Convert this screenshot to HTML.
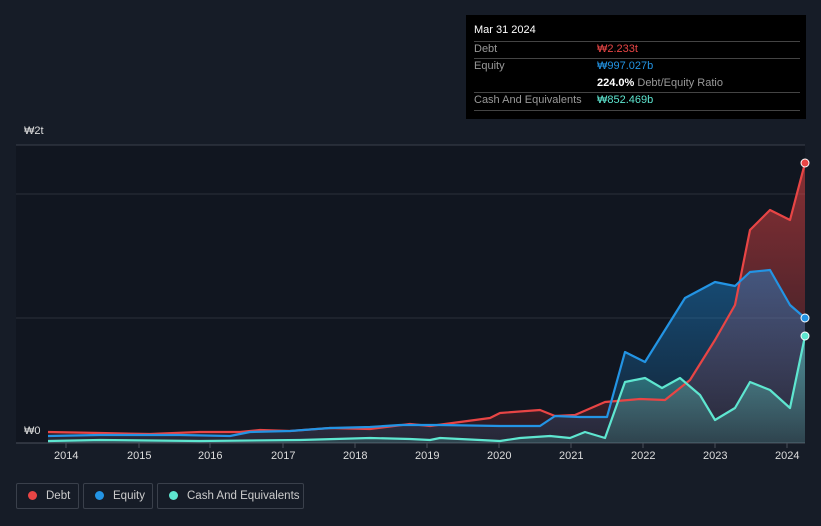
<!DOCTYPE html><html><head><style>
body{margin:0;width:821px;height:526px;background:#161c27;font-family:"Liberation Sans",sans-serif;overflow:hidden;position:relative}
.tt{position:absolute;left:466px;top:15px;width:340px;height:104px;background:#000;color:#fff;font-size:11px}
.r{position:absolute;left:8px;width:326px;border-top:1px solid #444}
.l{position:absolute;left:8px;color:#999}
.v{position:absolute;left:131px}
.lg{position:absolute;top:483px;height:26px;border:1px solid #3a404b;border-radius:2px;color:#ccc;font-size:11.5px;line-height:24px;box-sizing:border-box;white-space:nowrap}
.lg i{display:inline-block;width:9px;height:9px;border-radius:50%;margin:0 9px 0 11px;vertical-align:-1px}
.ax{position:absolute;top:450px;color:#ddd;font-size:11px}
</style></head><body>
<svg width="821" height="526" style="position:absolute;left:0;top:0">
<defs>
<linearGradient id="gr" x1="0" y1="0" x2="0" y2="1"><stop offset="0" stop-color="#e84545" stop-opacity=".55"/><stop offset="1" stop-color="#e84545" stop-opacity=".1"/></linearGradient>
<linearGradient id="gb" x1="0" y1="0" x2="0" y2="1"><stop offset="0" stop-color="#1e8fe0" stop-opacity=".45"/><stop offset="1" stop-color="#1e8fe0" stop-opacity=".1"/></linearGradient>
<linearGradient id="gc" x1="0" y1="0" x2="0" y2="1"><stop offset="0" stop-color="#5ee6d0" stop-opacity=".45"/><stop offset="1" stop-color="#5ee6d0" stop-opacity=".15"/></linearGradient>
</defs>
<rect x="16" y="145" width="789" height="298" fill="#111620"/>
<line x1="16" y1="145" x2="805" y2="145" stroke="#3a404b"/>
<line x1="16" y1="194" x2="805" y2="194" stroke="#2a303a"/>
<line x1="16" y1="318" x2="805" y2="318" stroke="#2a303a"/>
<line x1="16" y1="443" x2="805" y2="443" stroke="#4a505b"/>
<path d="M48,432 L100,433 150,434 200,432 240,432 260,430 290,431 330,428 370,429 410,424 430,426 460,422 490,418 500,413 540,410 555,416 575,415 605,402 640,399 665,400 690,380 715,340 735,305 750,230 770,210 790,220 805,163 L805,443 48,443Z" fill="url(#gr)"/>
<path d="M48,436 L100,435 180,435 230,436 250,432 290,431 330,428 370,427 400,425 440,425 500,426 540,426 555,416 580,417 607,417 625,352 645,362 665,330 685,298 715,282 735,286 750,272 770,270 790,305 805,318 L805,443 48,443Z" fill="url(#gb)"/>
<path d="M48,441 L100,440 200,441 300,440 370,438 410,439 430,440 440,438 500,441 520,438 550,436 570,438 585,432 605,438 625,382 645,378 662,388 680,378 700,395 715,420 735,408 750,382 770,390 790,408 805,336 L805,443 48,443Z" fill="url(#gc)"/>
<g fill="none" stroke-width="2.2" stroke-linejoin="round">
<path d="M48,432 L100,433 150,434 200,432 240,432 260,430 290,431 330,428 370,429 410,424 430,426 460,422 490,418 500,413 540,410 555,416 575,415 605,402 640,399 665,400 690,380 715,340 735,305 750,230 770,210 790,220 805,163" stroke="#e84545"/>
<path d="M48,436 L100,435 180,435 230,436 250,432 290,431 330,428 370,427 400,425 440,425 500,426 540,426 555,416 580,417 607,417 625,352 645,362 665,330 685,298 715,282 735,286 750,272 770,270 790,305 805,318" stroke="#2394e4"/>
<path d="M48,441 L100,440 200,441 300,440 370,438 410,439 430,440 440,438 500,441 520,438 550,436 570,438 585,432 605,438 625,382 645,378 662,388 680,378 700,395 715,420 735,408 750,382 770,390 790,408 805,336" stroke="#5ee6d0"/>
</g>
<circle cx="805" cy="163" r="4" fill="#e84545" stroke="#fff" stroke-width="1"/>
<circle cx="805" cy="318" r="4" fill="#2394e4" stroke="#fff" stroke-width="1"/>
<circle cx="805" cy="336" r="4" fill="#5ee6d0" stroke="#fff" stroke-width="1"/>
<g stroke="#4a505b"><line x1="66" y1="443" x2="66" y2="448"/><line x1="139" y1="443" x2="139" y2="448"/><line x1="210" y1="443" x2="210" y2="448"/><line x1="283" y1="443" x2="283" y2="448"/><line x1="355" y1="443" x2="355" y2="448"/><line x1="427" y1="443" x2="427" y2="448"/><line x1="499" y1="443" x2="499" y2="448"/><line x1="571" y1="443" x2="571" y2="448"/><line x1="643" y1="443" x2="643" y2="448"/><line x1="715" y1="443" x2="715" y2="448"/><line x1="787" y1="443" x2="787" y2="448"/></g>
</svg>
<div style="position:absolute;left:24px;top:125px;color:#ddd;font-size:11px">₩2t</div>
<div style="position:absolute;left:24px;top:425px;color:#ddd;font-size:11px">₩0</div>
<div class="ax" style="left:54px">2014</div><div class="ax" style="left:127px">2015</div><div class="ax" style="left:198px">2016</div><div class="ax" style="left:271px">2017</div><div class="ax" style="left:343px">2018</div><div class="ax" style="left:415px">2019</div><div class="ax" style="left:487px">2020</div><div class="ax" style="left:559px">2021</div><div class="ax" style="left:631px">2022</div><div class="ax" style="left:703px">2023</div><div class="ax" style="left:775px">2024</div>
<div class="tt">
<div style="position:absolute;left:8px;top:9px;font-size:11px">Mar 31 2024</div>
<div class="r" style="top:26px"></div>
<div class="l" style="top:28px">Debt</div><div class="v" style="top:28px;color:#e84545">₩2.233t</div>
<div class="r" style="top:43px"></div>
<div class="l" style="top:45px">Equity</div><div class="v" style="top:45px;color:#2394e4">₩997.027b</div>
<div class="v" style="top:62px;font-weight:bold">224.0% <span style="color:#999;font-weight:normal">Debt/Equity Ratio</span></div>
<div class="r" style="top:77px"></div>
<div class="l" style="top:79px">Cash And Equivalents</div><div class="v" style="top:79px;color:#5ee6d0">₩852.469b</div>
<div class="r" style="top:95px"></div>
</div>
<div class="lg" style="left:16px;width:63px"><i style="background:#e84545"></i>Debt</div>
<div class="lg" style="left:83px;width:70px"><i style="background:#2394e4"></i>Equity</div>
<div class="lg" style="left:157px;width:147px"><i style="background:#5ee6d0"></i>Cash And Equivalents</div>
</body></html>
